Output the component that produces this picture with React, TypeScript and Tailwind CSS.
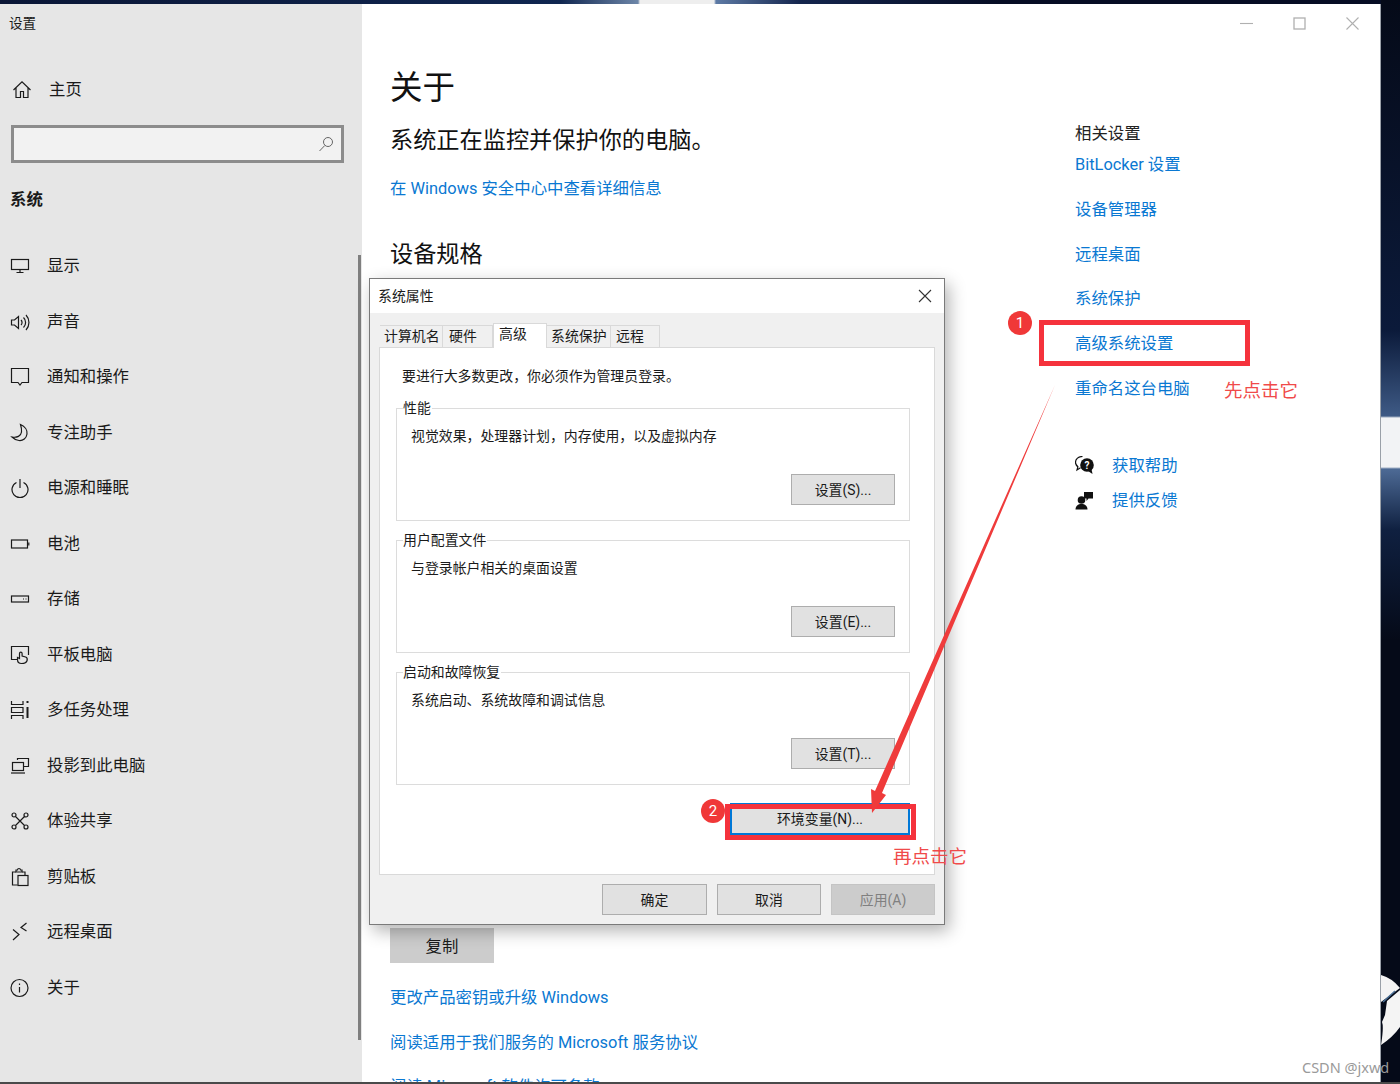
import type { ReactNode } from 'react';

const FONT = "font-['Roboto','Noto_Sans_CJK_SC',sans-serif]";

const Ico = ({ children }: { children: ReactNode }) => (
  <svg width="20" height="20" viewBox="0 0 20 20" fill="none" stroke="#1a1a1a" strokeWidth="1.2" className="shrink-0">
    {children}
  </svg>
);

const navItems: { label: string; icon: ReactNode }[] = [
  { label: '显示', icon: <><rect x="1.5" y="3.5" width="17" height="10" /><path d="M10 13.5v3M6.5 16.5h7" /></> },
  { label: '声音', icon: <><path d="M1.5 8h3l4-3.5v12L4.5 13h-3z" /><path d="M11 8a3.5 3.5 0 0 1 0 5M13.5 5.5a7 7 0 0 1 0 10M16 3a11 11 0 0 1 0 15" /></> },
  { label: '通知和操作', icon: <path d="M1.5 1.5h17v14H12l-2 2.500-2-2.500H1.5z" /> },
  { label: '专注助手', icon: <path d="M10.5 1.5c4.500 2 7 6 6.500 9.500-.5 4-4 7-8 6.500-3-.3-5.500-2-7-3.500 5 1 9-1 9.500-5 .3-2.500-.2-5-1-7.500z" /> },
  { label: '电源和睡眠', icon: <><path d="M6.5 4.500a8 8 0 1 0 7 0" /><path d="M10 1v9" /></> },
  { label: '电池', icon: <><rect x="1.5" y="6" width="16" height="8" /><path d="M18.8 8.500v3" /></> },
  { label: '存储', icon: <><rect x="1.5" y="7" width="17" height="6" /><path d="M13 10h1M15.5 10h1" /></> },
  { label: '平板电脑', icon: <><path d="M9 14.500H1.5v-13h17V10" /><path d="M11.5 18.500c-2.500 0-4-1.500-4-4v-2l2 1V8.500a1.300 1.300 0 0 1 2.600 0V11l3.500 1c1.500.5 2 1.500 1.500 3.500-.5 2-2 3-5.600 3z" fill="#e6e6e6" /></> },
  { label: '多任务处理', icon: <><path d="M1.5 1v3.500H13V1M1.5 19v-3.500H13V19M1.5 7.500H13v5H1.5z" /><path d="M17.5 1v2M17.5 7v11" strokeWidth="2" /></> },
  { label: '投影到此电脑', icon: <><path d="M7.5 4V2.500h11v8H14" /><rect x="2.5" y="6.500" width="11" height="8" fill="#e6e6e6" /><path d="M1 17h14" /></> },
  { label: '体验共享', icon: <><circle cx="4" cy="4" r="2" /><circle cx="16" cy="4" r="2" /><circle cx="4" cy="16" r="2" /><circle cx="16" cy="16" r="2" /><path d="M5.5 5.500l9 9M14.5 5.500l-9 9" /></> },
  { label: '剪贴板', icon: <><path d="M6 5H2.5v13h5M12 5h3v3" /><path d="M6 5V3h1.500a1.500 1.500 0 0 1 3 0H12v2z" /><rect x="8" y="8.500" width="10" height="10" /></> },
  { label: '远程桌面', icon: <path d="M3 7.500L9 12.500 3 18M16.5 1L11 5.500 16.5 9" /> },
  { label: '关于', icon: <><circle cx="9.5" cy="10" r="8.500" /><path d="M9.5 9v5.500M9.5 5.500V7" /></> },
];

const sideLinks = ['BitLocker 设置', '设备管理器', '远程桌面', '系统保护', '高级系统设置', '重命名这台电脑'];

const DlgButton = ({ label, disabled, w = 'w-[104px]' }: { label: string; disabled?: boolean; w?: string }) => (
  <div className={`${w} h-[31px] pt-[2px] flex items-center justify-center border ${disabled ? 'bg-[#cccccc] border-[#c4c4c4] text-[#808080]' : 'bg-[#e1e1e1] border-[#adadad] text-[#1a1a1a]'}`}>
    {label}
  </div>
);

const groups = [
  { legend: '性能', body: '视觉效果，处理器计划，内存使用，以及虚拟内存', btn: '设置(S)...' },
  { legend: '用户配置文件', body: '与登录帐户相关的桌面设置', btn: '设置(E)...' },
  { legend: '启动和故障恢复', body: '系统启动、系统故障和调试信息', btn: '设置(T)...' },
];

const tabs = [
  { label: '计算机名', cls: 'w-[63px] pl-[4px]' },
  { label: '硬件', cls: 'w-[50px] pl-[6px]' },
  { label: '高级', cls: 'w-[54px] pl-[5px]', active: true },
  { label: '系统保护', cls: 'w-[64px] pl-[4px]' },
  { label: '远程', cls: 'w-[49px] pl-[5px]' },
];

const Dialog = () => (
  <div className="absolute left-[369px] top-[278px] w-[576px] h-[647px] bg-[#f0f0f0] border border-[#7a7a7a] shadow-[4px_6px_16px_rgba(0,0,0,0.3)] flex flex-col text-[#1a1a1a] text-[13.9px]">
    <div className="h-[34px] bg-white flex items-center justify-between pl-[8px] pr-[12px] shrink-0">
      <span>系统属性</span>
      <svg width="14" height="14" viewBox="0 0 14 14" stroke="#333" strokeWidth="1.1"><path d="M1 1l12 12M13 1L1 13" /></svg>
    </div>
    <div className="flex items-end h-[34px] pl-[10px] shrink-0">
      {tabs.map((t) => (
        <div
          key={t.label}
          className={`${t.cls} flex items-center border-t border-r border-[#d9d9d9] ${t.active ? 'h-[25px] pb-[4px] bg-white border-l relative z-10 -mb-px' : 'h-[22px] bg-[#f0f0f0]'}`}
        >
          {t.label}
        </div>
      ))}
    </div>
    <div className="mx-[9px] h-[528px] bg-white border border-[#d9d9d9] pt-[18px] px-[16px] flex flex-col">
      <div className="pl-[6px] leading-[20px]">要进行大多数更改，你必须作为管理员登录。</div>
      <div className="mt-[22px] flex flex-col gap-[19px] w-[514px]">
        {groups.map((g) => (
          <div key={g.legend} className="relative h-[113px] border border-[#dcdcdc] pt-[17px] pl-[14px]">
            <span className="absolute -top-[11px] left-[6px] bg-white pr-[1px] leading-[20px]">{g.legend}</span>
            <div className="leading-[20px]">{g.body}</div>
            <div className="absolute right-[14px] bottom-[15px]">
              <DlgButton label={g.btn} />
            </div>
          </div>
        ))}
      </div>
      <div className="flex justify-end mt-[18px] w-[514px]">
        <div className="w-[180px] h-[32px] flex items-center justify-center bg-[#e1e1e1] border-2 border-[#0078d7]">环境变量(N)...</div>
      </div>
    </div>
    <div className="flex justify-end gap-[10px] pr-[9px] pt-[9px]">
      <DlgButton label="确定" w="w-[105px]" />
      <DlgButton label="取消" />
      <DlgButton label="应用(A)" disabled />
    </div>
  </div>
);

const Annotations = () => (
  <>
    <div className="absolute left-[1039px] top-[320px] w-[211px] h-[46px] border-[5px] border-[#f5323c]" />
    <div className="absolute left-[1008px] top-[311px] w-[24px] h-[24px] rounded-full bg-[#f03838] text-white text-[15px] flex items-center justify-center">1</div>
    <div className="absolute left-[1224px] top-[379px] text-[18.5px] leading-[24px] text-[#f04a4a]">先点击它</div>
    <div className="absolute left-[725px] top-[804px] w-[191px] h-[36px] border-[5px] border-[#f5323c]" />
    <div className="absolute left-[701px] top-[799px] w-[24px] h-[24px] rounded-full bg-[#f03838] text-white text-[15px] flex items-center justify-center">2</div>
    <div className="absolute left-[893px] top-[845px] text-[18.5px] leading-[24px] text-[#f04a4a]">再点击它</div>
    <svg className="absolute left-0 top-0 pointer-events-none" width="1400" height="1084" viewBox="0 0 1400 1084">
      <path d="M1055 385 L882 793 L886 795 L872 813 L871 789 L875 791 Z" fill="#ef3b3b" />
    </svg>
  </>
);

// wallpaper bits that show past the settings window
const Wallpaper = () => (
  <>
    <div className="absolute left-0 top-0 w-full h-[4px] bg-[linear-gradient(90deg,#0a1636_0,#102650_560px,#6d86a8_638px,#eeeeee_640px,#eeeeee_714px,#5d7aa5_716px,#14254d_800px,#060d24_1000px)]" />
    <div className="absolute right-0 top-0 w-[19px] h-full bg-[linear-gradient(180deg,#050a18_0,#0b1a3a_330px,#3e5a85_416px,#f2f3f5_418px,#f2f3f5_467px,#4d6a95_469px,#0f2040_530px,#050a18_640px)]" />
    <svg className="absolute left-[1381px] top-[975px]" width="19" height="70" viewBox="0 0 19 70">
      <path d="M0 0Q11 3 19 13L0 27Z" fill="#f4f4f4" />
      <path d="M19 15L6 26 4 40 1 47Q3 52 0 70 12 62 19 52Z" fill="#f4f4f4" />
      <path d="M2 27L14 16" stroke="#4a6f96" strokeWidth="1.5" />
    </svg>
  </>
);

export default function App() {
  return (
    <div className={`relative w-[1400px] h-[1084px] overflow-hidden bg-[#050a18] ${FONT}`}>
      <Wallpaper />

      <div className="relative mt-[4px] w-[1381px] h-[1078px] flex bg-white border-r border-[#9aa0a8]">
        <aside className="relative w-[362px] shrink-0 bg-[#e6e6e6] text-[#1a1a1a] flex flex-col">
          <div className="pl-[9px] pt-[9px] text-[13.6px] leading-[20px]">设置</div>
          <div className="flex items-center pl-[12px] gap-[17px] mt-[47px] h-[20px]">
            <svg width="20" height="20" viewBox="0 0 20 20" fill="none" stroke="#1a1a1a" strokeWidth="1.2">
              <path d="M1.5 10L10 1.800 18.5 10M4 8v9.500h4.500v-6h3v6H16V8" />
            </svg>
            <span className="text-[16.4px] leading-[20px]">主页</span>
          </div>
          <div className="mt-[25px] ml-[11px] w-[333px] h-[38px] border-[3px] border-[#8c8c8c] bg-[#f2f2f2] flex items-center justify-end pr-[7px]">
            <svg width="16" height="18" viewBox="0 0 16 18" fill="none" stroke="#666" strokeWidth="1"><circle cx="10" cy="7" r="4.5" /><path d="M6.8 10.500L1.5 16" /></svg>
          </div>
          <div className="pl-[10px] mt-[27px] text-[16.4px] leading-[20px] font-bold">系统</div>
          <nav className="mt-[28.5px]">
            {navItems.map((n) => (
              <div key={n.label} className="flex items-center h-[55.5px] pl-[10px] gap-[17px]">
                <Ico>{n.icon}</Ico>
                <span className="text-[16.4px] leading-[20px]">{n.label}</span>
              </div>
            ))}
          </nav>
          <div className="absolute left-[358px] top-[251px] w-[3px] h-[785px] bg-[#7f7f7f]" />
        </aside>

        <main className="flex-1 flex flex-col min-w-0">
          <div className="h-[40px] flex items-start justify-end pt-[13px] pr-[21px] gap-[40px] shrink-0">
            <svg width="13" height="13" viewBox="0 0 13 13" stroke="#b0b0b0" strokeWidth="1.1"><path d="M0 6.500h13" /></svg>
            <svg width="13" height="13" viewBox="0 0 13 13" fill="none" stroke="#b0b0b0" strokeWidth="1.3"><rect x="1" y="1" width="11" height="11" /></svg>
            <svg width="13" height="13" viewBox="0 0 13 13" stroke="#b0b0b0" strokeWidth="1.1"><path d="M.5.500l12 12M12.500.500l-12 12" /></svg>
          </div>
          <div className="flex flex-1 min-h-0">
            <section className="w-[713px] pl-[28px] shrink-0 overflow-hidden">
              <h1 className="text-[32.5px] leading-[44px] mt-[22px] text-[#111]">关于</h1>
              <p className="text-[23.2px] leading-[32px] mt-[14px] text-[#111]">系统正在监控并保护你的电脑。</p>
              <a className="block text-[16.4px] leading-[22px] mt-[22px] text-[#0a78d2]">在 Windows 安全中心中查看详细信息</a>
              <h2 className="text-[23.2px] leading-[32px] mt-[38px] text-[#111]">设备规格</h2>
              <div className="mt-[658px] w-[104px] h-[35px] pt-[4px] bg-[#cccccc] text-[16.4px] text-[#1a1a1a] flex items-center justify-center">复制</div>
              <div className="mt-[24px] flex flex-col gap-[22.5px] text-[16.4px] leading-[22px] text-[#0a78d2]">
                <a>更改产品密钥或升级 Windows</a>
                <a>阅读适用于我们服务的 Microsoft 服务协议</a>
                <a>阅读 Microsoft 软件许可条款</a>
              </div>
            </section>
            <section className="flex-1 pt-[79px]">
              <div className="text-[16.4px] leading-[22px] text-[#222]">相关设置</div>
              <div className="mt-[9px] flex flex-col gap-[22.8px] text-[16.4px] leading-[22px] text-[#0a78d2]">
                {sideLinks.map((l) => <a key={l}>{l}</a>)}
              </div>
              <div className="mt-[55px] flex items-center gap-[18px] text-[16.4px] leading-[22px] text-[#0a78d2]">
                <svg width="19" height="19" viewBox="0 0 19 19" className="shrink-0">
                  <path d="M7.5.5C3.5.5.5 3 .5 6.300c0 1.800.9 3.300 2.400 4.400L2 14l3.500-2.200" fill="none" stroke="#111" strokeWidth="1.2" />
                  <circle cx="12" cy="9" r="6.800" fill="#111" />
                  <path d="M13 15l4.500 3-1-5z" fill="#111" />
                  <text x="12" y="12.500" fontSize="10" fontWeight="700" fill="#fff" textAnchor="middle">?</text>
                </svg>
                <a>获取帮助</a>
              </div>
              <div className="mt-[13px] flex items-center gap-[18px] text-[16.4px] leading-[22px] text-[#0a78d2]">
                <svg width="19" height="19" viewBox="0 0 19 19" className="shrink-0">
                  <circle cx="6.5" cy="9" r="3.800" fill="#111" />
                  <path d="M.5 18.500c0-3.500 2.500-5.500 6-5.500s6 2 6 5.500z" fill="#111" />
                  <path d="M9 1h9v6.500h-4.500L11.500 10V7.500H9z" fill="#111" />
                </svg>
                <a>提供反馈</a>
              </div>
            </section>
          </div>
        </main>
      </div>
      <div className="relative h-[2px] bg-[#4a4a4a]" />

      <Dialog />
      <Annotations />
      <div className="absolute left-[1302px] top-[1057px] text-[14.5px] leading-[20px] text-[#9a9a9a] font-['Noto_Sans',sans-serif]">CSDN @jxwd</div>
    </div>
  );
}
